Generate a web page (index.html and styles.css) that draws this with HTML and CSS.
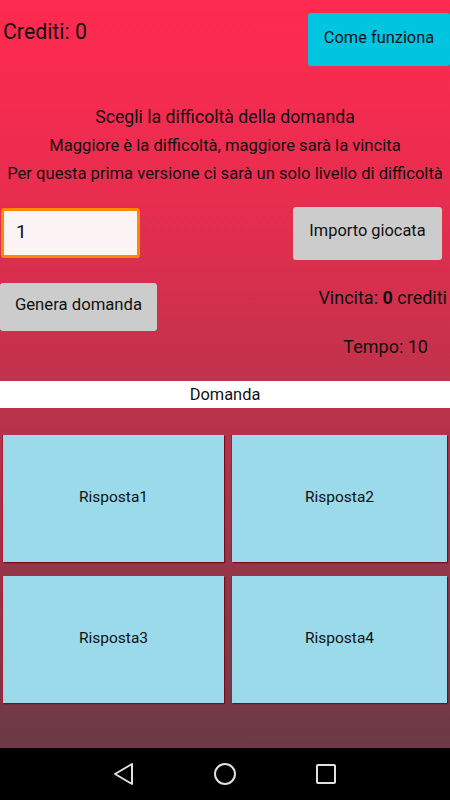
FILE: index.html
```html
<!DOCTYPE html>
<html lang="it">
<head>
    <meta charset="UTF-8">
    <meta name="viewport" content="width=device-width, initial-scale=1.0">
    <title>Quiz</title>
    <link rel="stylesheet" href="styles.css">
</head>
<body>
    <div class="screen">
        <div class="top-row">
            <span class="credits">Crediti: 0</span>
            <button class="btn btn-help">Come funziona</button>
        </div>

        <div class="info">
            <p class="info-title">Scegli la difficoltà della domanda</p>
            <p>Maggiore è la difficoltà, maggiore sarà la vincita</p>
            <p>Per questa prima versione ci sarà un solo livello di difficoltà</p>
        </div>

        <div class="bet-row">
            <input type="text" class="bet-input" value="1">
            <button class="btn btn-grey btn-bet">Importo giocata</button>
        </div>

        <div class="gen-row">
            <button class="btn btn-grey btn-gen">Genera domanda</button>
            <span class="win">Vincita: <b>0</b> crediti</span>
        </div>

        <div class="time-row">Tempo: 10</div>

        <div class="question">Domanda</div>

        <div class="answers">
            <button class="answer">Risposta1</button>
            <button class="answer">Risposta2</button>
            <button class="answer">Risposta3</button>
            <button class="answer">Risposta4</button>
        </div>
    </div>

    <div class="navbar">
        <svg width="22" height="24" viewBox="0 0 22 24">
            <path d="M2 12 L19 2 L19 22 Z" fill="none" stroke="#e0e0e0" stroke-width="2" stroke-linejoin="round"/>
        </svg>
        <svg width="24" height="24" viewBox="0 0 24 24">
            <circle cx="12" cy="12" r="10" fill="none" stroke="#e0e0e0" stroke-width="2"/>
        </svg>
        <svg width="22" height="22" viewBox="0 0 22 22">
            <rect x="2" y="2" width="18" height="18" rx="1" fill="none" stroke="#e0e0e0" stroke-width="2"/>
        </svg>
    </div>
</body>
</html>
```

FILE: styles.css
```css
html, body {
    margin: 0;
    padding: 0;
}
body {
    width: 450px;
    height: 800px;
    font-family: Roboto, "Noto Sans", sans-serif;
    color: #111;
    display: flex;
    flex-direction: column;
    overflow: hidden;
}
.screen {
    height: 748px;
    background: linear-gradient(#ff2a50 0%, #e82d4f 27%, #b8334a 56%, #6b3a46 100%);
}
.btn {
    font-family: Roboto, "Noto Sans", sans-serif;
    font-size: 16.4px;
    color: #111;
    border: none;
    border-radius: 3px;
    cursor: pointer;
    padding: 0 0 5px 0;
}
.btn-grey {
    background-color: #cccccc;
}
.top-row {
    display: flex;
    justify-content: space-between;
    align-items: flex-start;
    padding-top: 13px;
}
.credits {
    font-size: 21.3px;
    line-height: 24px;
    margin-top: 7px;
    margin-left: 3px;
}
.btn-help {
    width: 142px;
    height: 53px;
    background-color: #00c5e0;
}
.info {
    margin-top: 37px;
    text-align: center;
}
.info p {
    margin: 0;
    font-size: 16.6px;
    line-height: 28.5px;
}
.info .info-title {
    font-size: 17.7px;
}
.bet-row {
    display: flex;
    justify-content: space-between;
    align-items: flex-start;
    margin-top: 18px;
    padding: 0 8px 0 1px;
}
.bet-input {
    box-sizing: border-box;
    width: 139px;
    height: 50px;
    margin-top: 1px;
    border: 3px solid #ff8a00;
    border-radius: 3px;
    background-color: #fcf3f4;
    font-family: Roboto, "Noto Sans", sans-serif;
    font-size: 19px;
    padding: 0 12px 3px 12px;
    color: #111;
}
.btn-bet {
    width: 149px;
    height: 53px;
}
.btn-gen {
    width: 157px;
    height: 48px;
    font-size: 16.7px;
}
.gen-row {
    display: flex;
    justify-content: space-between;
    align-items: flex-start;
    margin-top: 23px;
    padding-right: 3px;
}
.win {
    font-size: 18px;
    line-height: 22px;
    margin-top: 4px;
}
.time-row {
    text-align: right;
    font-size: 18px;
    line-height: 22px;
    margin-top: 5px;
    padding-right: 22px;
}
.question {
    margin-top: 23px;
    height: 27px;
    line-height: 27px;
    background-color: #fff;
    text-align: center;
    font-size: 16.4px;
}
.answers {
    display: grid;
    grid-template-columns: 221px 215px;
    grid-auto-rows: 127px;
    column-gap: 8px;
    row-gap: 14px;
    margin-top: 27px;
    padding-left: 3px;
}
.answer {
    background-color: #9adaea;
    border: none;
    border-radius: 0;
    box-shadow: 1px 1px 1px #7a0a1c, -1px 0 0 #b2182c;
    font-family: Roboto, "Noto Sans", sans-serif;
    font-size: 15.5px;
    color: #111;
    padding: 0 0 3px 0;
}
.navbar {
    height: 52px;
    background-color: #000;
    display: flex;
    justify-content: center;
    align-items: center;
    gap: 78px;
}
```
